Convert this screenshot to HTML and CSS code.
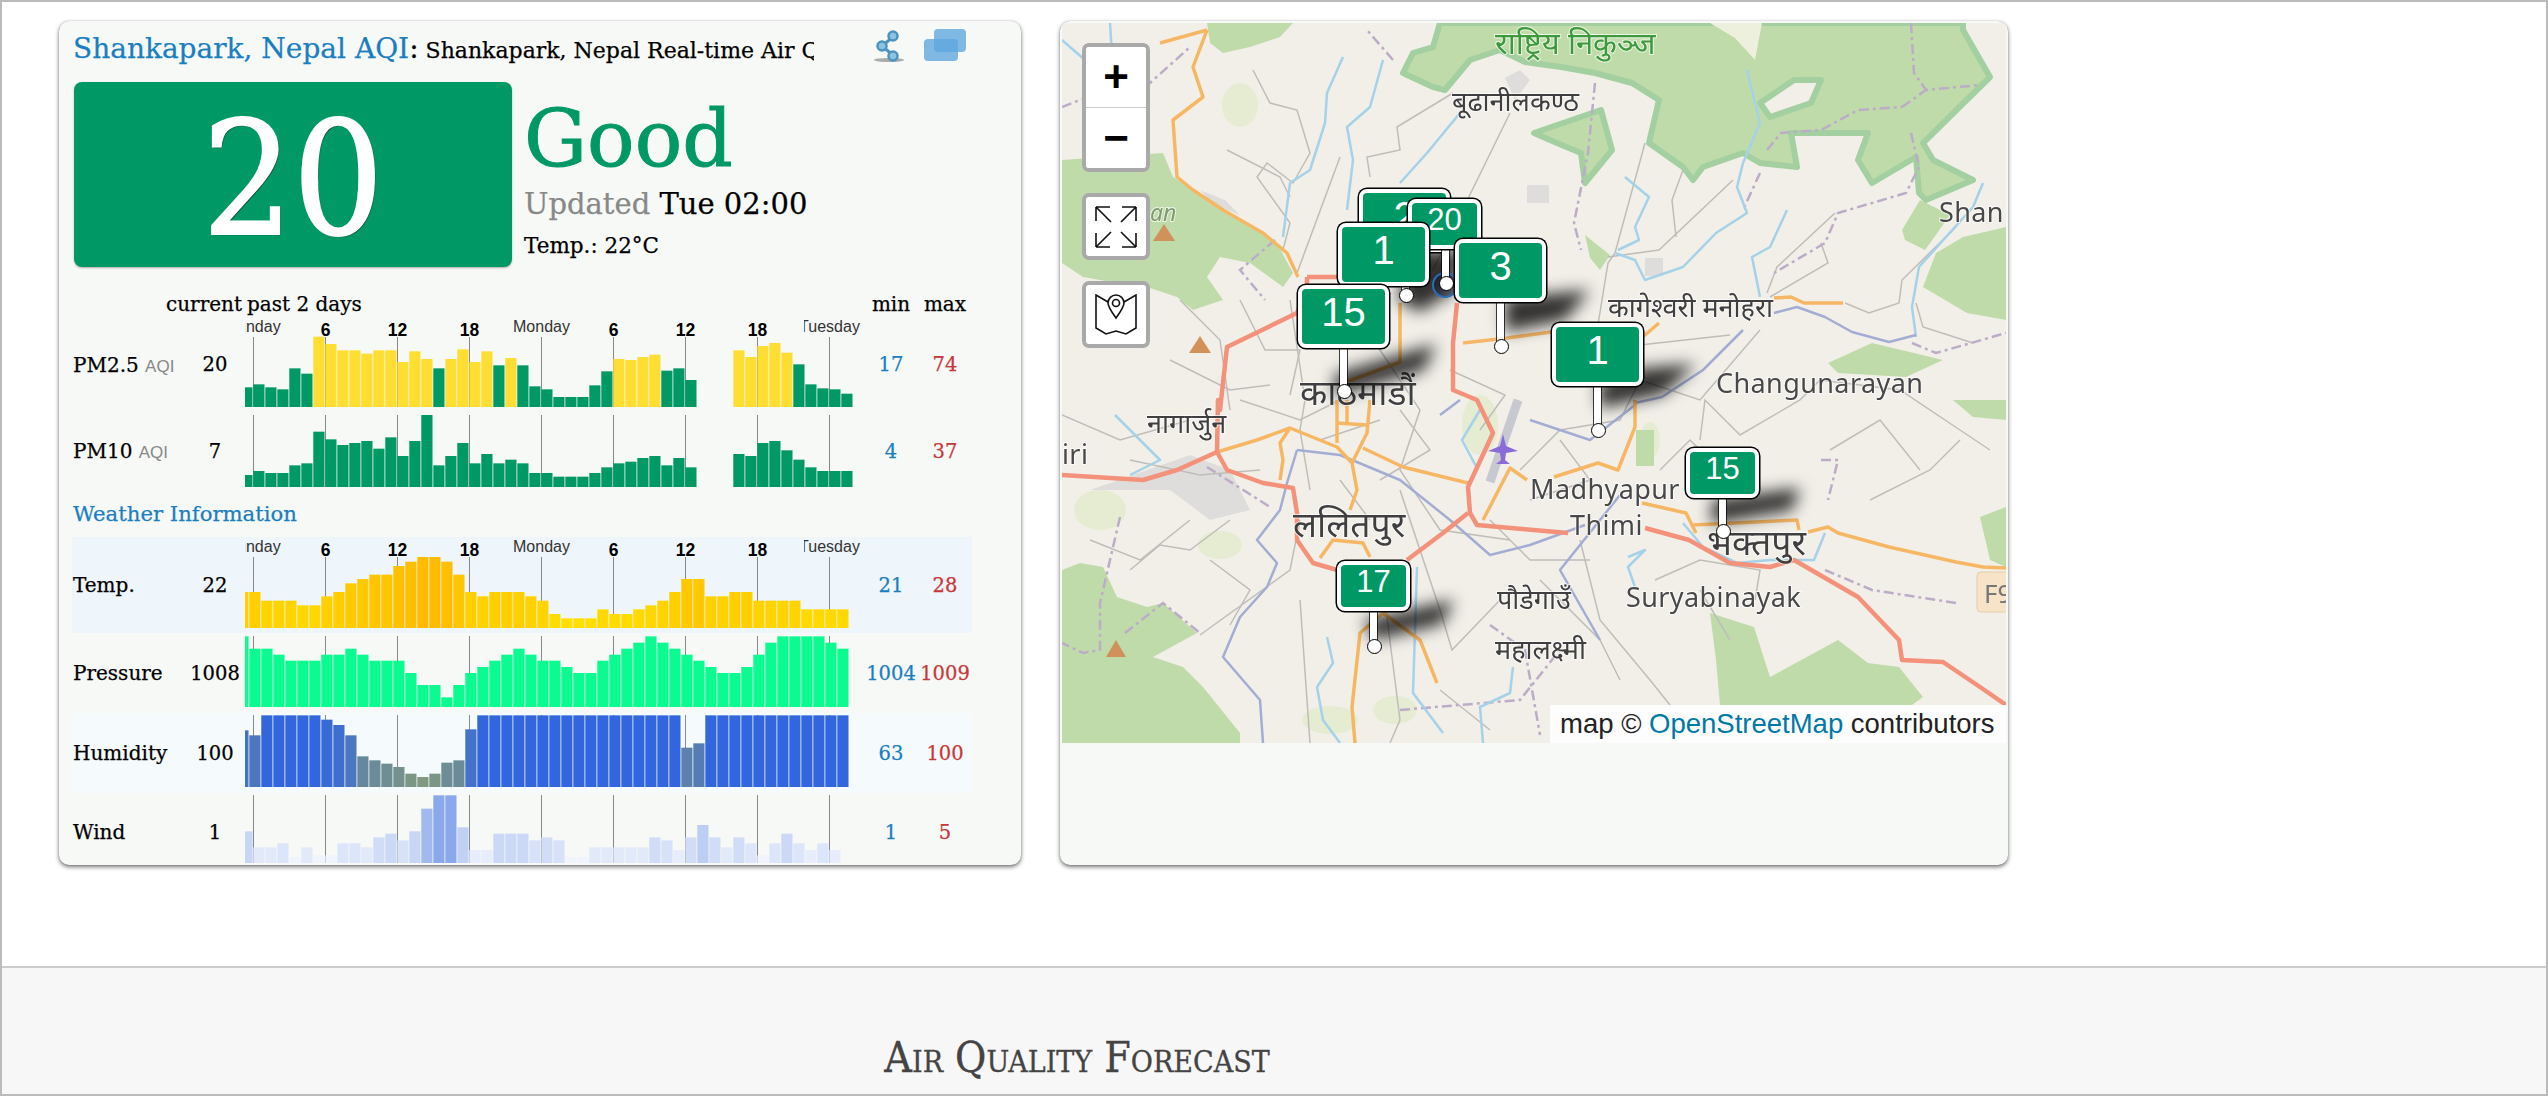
FILE: index.html
```html
<!DOCTYPE html>
<html lang="en">
<head>
<meta charset="utf-8">
<title>Shankapark, Nepal AQI</title>
<link rel="stylesheet" href="styles.css">
</head>
<body>
<div class="page">
  <main class="cards">
    <section class="card card-aqi">
      <header class="title-row">
        <h1 class="title"><a class="title-link">Shankapark, Nepal AQI</a><span class="colon">:</span> <span class="title-sub">Shankapark, Nepal Real-time Air Quality Index</span></h1>
        <svg class="icon-share" viewBox="0 0 32 34" aria-hidden="true">
          <ellipse class="icon-share-base" cx="16" cy="31" rx="15" ry="2"/>
          <path class="icon-share-link" d="M21 7 L9 17 L21 27"/>
          <circle class="icon-share-dot" cx="20" cy="7" r="4.5"/>
          <circle class="icon-share-dot" cx="9" cy="17" r="4.5"/>
          <circle class="icon-share-dot" cx="20" cy="27" r="4.5"/>
        </svg>
        <svg class="icon-windows" viewBox="0 0 43 33" aria-hidden="true">
          <rect class="icon-window" x="10" y="0" width="32" height="23" rx="4"/>
          <rect class="icon-window" x="0" y="10" width="34" height="22" rx="4"/>
        </svg>
      </header>
      <div class="summary">
        <div class="aqi-box">20</div>
        <div class="summary-text">
          <div class="level">Good</div>
          <div class="updated"><span class="updated-label">Updated</span> Tue 02:00</div>
          <div class="temp-now">Temp.: 22°C</div>
        </div>
      </div>

      <div class="row row-head">
        <span></span>
        <span class="head-current">current</span>
        <span class="head-past">past 2 days</span>
        <span class="cell-num">min</span>
        <span class="cell-num">max</span>
      </div>
      <div class="row row-pm25">
        <span class="label">PM2.5 <small class="aqi-tag">AQI</small></span>
        <span class="cell-num">20</span>
        <div class="chart" data-chart="pm25"></div>
        <span class="cell-num low">17</span>
        <span class="cell-num high">74</span>
      </div>
      <div class="row row-pm10">
        <span class="label">PM10 <small class="aqi-tag">AQI</small></span>
        <span class="cell-num">7</span>
        <div class="chart" data-chart="pm10"></div>
        <span class="cell-num low">4</span>
        <span class="cell-num high">37</span>
      </div>
      <h2 class="weather-title">Weather Information</h2>
      <div class="row row-temp">
        <span class="label">Temp.</span>
        <span class="cell-num">22</span>
        <div class="chart" data-chart="temp"></div>
        <span class="cell-num low">21</span>
        <span class="cell-num high">28</span>
      </div>
      <div class="row row-pressure">
        <span class="label">Pressure</span>
        <span class="cell-num">1008</span>
        <div class="chart" data-chart="pressure"></div>
        <span class="cell-num low">1004</span>
        <span class="cell-num high">1009</span>
      </div>
      <div class="row row-humidity">
        <span class="label">Humidity</span>
        <span class="cell-num">100</span>
        <div class="chart" data-chart="humidity"></div>
        <span class="cell-num low">63</span>
        <span class="cell-num high">100</span>
      </div>
      <div class="row row-wind">
        <span class="label">Wind</span>
        <span class="cell-num">1</span>
        <div class="chart" data-chart="wind"></div>
        <span class="cell-num low">1</span>
        <span class="cell-num high">5</span>
      </div>
    </section>

    <section class="card card-map">
      <div class="map">
        <svg class="map-art" viewBox="1062 23 944 720" aria-hidden="true">
          <rect class="land" x="1062" y="23" width="944" height="720"/>
          <g class="urban">
            <path d="M1090 490 1190 455 1230 470 1250 510 1210 520 1170 490Z"/>
            <path d="M1200 190 1225 200 1240 215 1215 205Z"/>
            <path d="M1530 80 1520 70 1505 78 1515 100Z"/>
            <path d="M1527 185h22v18h-22z"/>
            <path d="M1645 258h18v18h-18z"/>
          </g>
          <g class="pale">
            <ellipse cx="1240" cy="105" rx="18" ry="22"/>
            <ellipse cx="1100" cy="510" rx="26" ry="20"/>
            <ellipse cx="1220" cy="545" rx="22" ry="14"/>
            <ellipse cx="1330" cy="720" rx="28" ry="14"/>
            <ellipse cx="1395" cy="710" rx="22" ry="14"/>
            <ellipse cx="1480" cy="425" rx="18" ry="30"/>
            <ellipse cx="1650" cy="440" rx="10" ry="18"/>
          </g>
          <g class="forest">
            <path d="M1062 160 1163 153 1173 177 1207 197 1237 217 1277 243 1293 273 1283 287 1250 263 1220 257 1207 277 1223 300 1193 310 1177 297 1147 287 1117 283 1083 277 1062 263Z"/>
            <path d="M1207 23 1293 23 1280 37 1250 47 1223 53 1210 43Z"/>
            <path d="M1062 570 1080 563 1103 567 1117 597 1147 607 1163 603 1197 633 1153 657 1183 667 1203 687 1240 733 1240 743 1062 743Z"/>
            <path d="M1710 613 1754 627 1770 677 1838 640 1868 663 1899 667 1923 697 1912 705 1720 705 1716 660Z"/>
            <path d="M1963 237 2006 227 2006 320 1967 313 1923 287 1936 253Z"/>
            <path d="M1902 230 1920 200 1950 215 1925 250 1905 240Z"/>
            <path d="M1828 363 1872 343 1943 360 1906 377 1838 373Z"/>
            <path d="M1980 517 2006 507 2006 567 1990 560Z"/>
            <path d="M1953 400 2006 400 2006 420 1973 417Z"/>
            <path d="M1636 430h18v36h-18z"/>
            <path d="M1585 235 1610 255 1600 270 1590 258Z"/>
          </g>
          <g class="forest forest-edge">
            <path d="M1440 23 1433 47 1413 53 1403 73 1433 87 1445 90 1470 60 1500 50 1525 62 1561 67 1595 73 1632 83 1659 100 1649 143 1683 167 1693 180 1703 167 1743 153 1760 163 1797 167 1791 133 1868 133 1858 160 1872 183 1916 157 1919 193 1926 200 1973 180 1933 160 1923 143 1990 77 1963 30 1963 23Z"/>
            <path d="M1534 133 1601 110 1612 150 1585 183 1581 153 1557 143Z"/>
          </g>
          <path class="hole" d="M1760 103 1794 80 1821 80 1811 103 1770 117Z"/>
          <path class="hole-soft" d="M1710 23 1762 23 1755 60 1735 38Z"/>
          <g class="road-gray">
            <path d="M1253 70 1270 103 1297 110 1310 153 1293 183 1267 163 1257 177 1290 223 1283 250"/>
            <path d="M1227 150 1280 177 1290 197"/>
            <path d="M1453 93 1397 127 1400 150 1367 157 1370 177"/>
            <path d="M1510 113 1433 270"/>
            <path d="M1297 273 1340 157"/>
            <path d="M1645 143 1615 253 1608 263 1595 343"/>
            <path d="M1608 257 1659 250 1733 180"/>
            <path d="M1676 237 1672 200 1683 170"/>
            <path d="M1767 293 1777 267 1835 213"/>
            <path d="M1770 297 1828 263 1821 243"/>
            <path d="M1845 303 1869 313 1899 303 1902 280 1956 227"/>
            <path d="M1916 303 1923 327 1973 343"/>
            <path d="M1290 300 1305 400 1300 430 1310 490"/>
            <path d="M1240 400 1300 420 1340 400"/>
            <path d="M1360 320 1420 410 1400 470 1440 530 1510 540"/>
            <path d="M1450 370 1505 395 1480 430"/>
            <path d="M1300 600 1310 743"/>
            <path d="M1340 480 1370 520"/>
            <path d="M1230 520 1190 550 1160 545 1130 570"/>
            <path d="M1200 635 1290 570 1300 520"/>
            <path d="M1400 490 1440 610 1452 650 1500 600"/>
            <path d="M1386 610 1400 720 1390 743"/>
            <path d="M1520 470 1560 430 1620 420 1640 380 1700 400 1760 330"/>
            <path d="M1700 440 1705 400 1740 435 1800 400 1820 380 1900 390 1960 430 1990 450"/>
            <path d="M1655 580 1700 560 1760 570 1755 600"/>
            <path d="M1580 540 1600 620 1650 680 1670 705"/>
            <path d="M1870 500 1930 470 1960 440"/>
            <path d="M1540 580 1600 640 1620 680"/>
            <path d="M1440 690 1490 730"/>
            <path d="M1130 460 1200 475 1260 470"/>
            <path d="M1062 415 1120 440 1190 420"/>
            <path d="M1180 300 1220 340 1230 410"/>
            <path d="M1560 350 1600 380 1640 345 1730 335"/>
            <path d="M1240 300 1265 350 1300 350 1290 395"/>
            <path d="M1170 360 1230 390 1270 385"/>
            <path d="M1400 410 1430 450 1380 480"/>
            <path d="M1320 440 1380 420"/>
            <path d="M1560 440 1590 480 1530 500"/>
            <path d="M1660 470 1690 440 1720 470"/>
            <path d="M1210 560 1250 590 1230 625"/>
            <path d="M1700 590 1730 640"/>
            <path d="M1830 450 1880 420 1920 470"/>
            <path d="M1090 540 1140 560 1190 520"/>
            <path d="M1490 520 1530 560 1590 560"/>
          </g>
          <g class="airport"><path d="M1518 400 1490 482"/></g>
          <g class="bound">
            <path d="M1911 23 1914 73 1926 90 1980 85"/>
            <path d="M1902 107 1926 90"/>
            <path d="M1767 150 1781 133 1821 130 1858 110 1902 107"/>
            <path d="M1911 133 1919 167 1906 193 1838 213 1825 243 1774 273"/>
            <path d="M1760 173 1743 210"/>
            <path d="M1595 83 1588 153 1574 223 1581 250"/>
            <path d="M1393 60 1367 30"/>
            <path d="M1062 107 1080 100 1150 83 1190 47"/>
            <path d="M1207 467 1270 507"/>
            <path d="M1120 517 1100 603 1100 650 1083 653 1062 643"/>
            <path d="M1125 633 1163 603 1200 633"/>
            <path d="M1821 460 1838 460 1828 500"/>
            <path d="M1825 570 1872 590 1956 603"/>
            <path d="M1912 343 1936 353 2006 333"/>
            <path d="M1400 710 1520 700 1560 650"/>
            <path d="M1275 240 1240 270 1265 300"/>
            <path d="M1490 625 1525 650 1540 735"/>
          </g>
          <g class="river">
            <path d="M1343 57 1327 93 1325 123 1310 170 1290 183 1283 237"/>
            <path d="M1383 60 1370 107 1347 127 1353 160 1347 210"/>
            <path d="M1460 113 1427 153 1400 183"/>
            <path d="M1625 177 1649 197 1635 227 1639 240 1618 250"/>
            <path d="M1747 70 1760 123 1743 163 1737 187 1747 213 1716 233 1683 267 1645 280 1635 260 1615 253"/>
            <path d="M1787 210 1770 247 1752 257 1760 297"/>
            <path d="M1983 183 1973 207 1919 267 1912 307 1916 337"/>
            <path d="M1628 557 1645 550 1628 567 1635 587"/>
            <path d="M1327 637 1333 663 1317 687 1323 720 1340 743"/>
            <path d="M1417 567 1413 693 1443 733"/>
            <path d="M1513 667 1510 693 1480 707 1483 743"/>
            <path d="M1683 523 1703 547 1737 563 1770 560 1814 560 1825 533"/>
            <path d="M1062 40 1085 60 1105 75"/>
            <path d="M1110 23 1112 55"/>
            <path d="M1115 415 1160 460 1130 475"/>
            <path d="M1480 410 1462 440 1478 470"/>
          </g>
          <g class="river-deep">
            <path d="M1774 313 1797 307 1825 317 1852 332 1889 342 1916 335"/>
            <path d="M1743 330 1703 370 1662 397 1635 403"/>
            <path d="M1297 450 1287 483 1280 510 1257 540 1277 563 1267 587 1240 617 1223 657 1260 700 1263 743"/>
            <path d="M1297 450 1340 455 1400 480 1450 520 1490 555 1530 545 1585 525"/>
            <path d="M1460 400 1440 415"/>
            <path d="M1530 420 1590 440 1635 405"/>
            <path d="M1620 495 1560 570 1600 640"/>
          </g>
          <g class="road-orange">
            <path d="M1207 30 1160 43"/>
            <path d="M1207 30 1193 67 1203 97 1173 120 1177 177 1193 190 1223 210 1263 233 1287 253 1298 277"/>
            <path d="M1217 452 1257 440 1290 428 1337 447 1352 463 1357 490 1350 510"/>
            <path d="M1290 428 1280 443 1283 460 1280 480"/>
            <path d="M1337 400 1337 443"/>
            <path d="M1347 400 1347 423"/>
            <path d="M1370 400 1367 433 1352 463"/>
            <path d="M1337 423 1367 425"/>
            <path d="M1363 448 1403 467 1468 483"/>
            <path d="M1483 520 1510 468 1527 480"/>
            <path d="M1320 558 1333 540 1363 543 1370 557"/>
            <path d="M1355 743 1352 707 1360 633 1383 613 1420 640 1437 683"/>
            <path d="M1554 477 1598 463 1618 470 1635 427 1635 400"/>
            <path d="M1642 503 1686 513 1696 533"/>
            <path d="M1693 525 1797 520 1799 530"/>
            <path d="M1808 532 1828 527 1838 533 1889 547 1956 562 1983 567 2006 568"/>
            <path d="M1774 298 1791 297 1804 303 1843 303"/>
            <path d="M1463 343 1507 338 1551 332 1645 335 1659 323"/>
            <path d="M1338 385 1400 362 1400 303"/>
          </g>
          <g class="road-red">
            <path d="M1307 277 1307 287 1297 313 1227 347 1220 410 1218 400 1217 452"/>
            <path d="M1307 277 1383 277"/>
            <path d="M1457 303 1453 343 1453 390 1477 400 1493 433 1468 487 1470 513 1477 525 1568 533"/>
            <path d="M1645 528 1689 540 1730 563 1770 567 1794 560 1858 597 1899 640 1902 660 1943 662 1980 687 2006 705"/>
            <path d="M1062 475 1143 480 1177 470 1217 452 1227 470 1263 483 1293 488 1297 513 1297 540 1313 563 1337 570"/>
            <path d="M1407 560 1443 533 1468 513"/>
          </g>
          <g class="peak">
            <path d="M1164 224 1175 241H1153Z"/>
            <path d="M1200 336 1211 353H1189Z"/>
            <path d="M1116 640 1126 657H1106Z"/>
          </g>
          <g class="plane">
            <path d="M1503 434 1506 446 1518 451 1506 453 1505 460 1510 464H1496L1501 460 1500 453 1488 451 1500 446Z"/>
          </g>
          <rect class="shield" x="1977" y="572" width="40" height="40" rx="4"/>
          <text class="shield-text" x="1984" y="603">F9</text>
          <g class="place">
            <text class="place-park" x="1495" y="54">राष्ट्रिय निकुञ्ज</text>
            <text x="1452" y="111">बूढानीलकण्ठ</text>
            <text class="place-latin" x="1939" y="222">Shan</text>
            <text x="1608" y="317">कागेश्वरी मनोहरा</text>
            <text class="place-latin" x="1716" y="393">Changunarayan</text>
            <text class="place-big" x="1300" y="405">काठमाडौं</text>
            <text x="1147" y="433">नागार्जुन</text>
            <text class="place-latin" x="1062" y="464">iri</text>
            <text class="place-big" x="1293" y="537">ललितपुर</text>
            <text class="place-latin" x="1530" y="499">Madhyapur</text>
            <text class="place-latin" x="1570" y="535">Thimi</text>
            <text class="place-big" x="1707" y="555">भक्तपुर</text>
            <text x="1497" y="609">पौडेगाउँ</text>
            <text class="place-latin" x="1626" y="607">Suryabinayak</text>
            <text x="1495" y="659">महालक्ष्मी</text>
            <text class="place-park-latin" x="1150" y="221">an</text>
          </g>
          <g class="pin-shadows">
            <path d="M1410 250 1462 250 1455 290 1420 312 1398 300Z"/>
            <path d="M1505 298 1590 290 1565 320 1505 332Z"/>
            <path d="M1644 368 1696 364 1664 394 1600 408 1598 384Z"/>
            <path d="M1335 374 1436 344 1424 370 1335 396Z"/>
            <path d="M1712 500 1800 488 1792 510 1712 524Z"/>
            <path d="M1364 620 1454 600 1442 624 1374 640Z"/>
          </g>
          <circle class="ring" cx="1445" cy="285" r="12"/>
        </svg>

        <div class="zoom-ctl">
          <button class="ctl-btn ctl-plus" type="button">+</button>
          <button class="ctl-btn ctl-minus" type="button">−</button>
        </div>
        <button class="ctl-single ctl-full" type="button" aria-label="Full screen">
          <svg class="ctl-icon" viewBox="0 0 42 42" aria-hidden="true">
            <path d="M1 1h14M1 1v14M1 1l15 15M41 1h-14M41 1v14M41 1 26 16M1 41h14M1 41v-14M1 41l15-15M41 41h-14M41 41v-14M41 41 26 26"/>
          </svg>
        </button>
        <button class="ctl-single ctl-layers" type="button" aria-label="Map">
          <svg class="ctl-icon" viewBox="0 0 42 42" aria-hidden="true">
            <path d="M13 8 1 1v33l10 6 10-3 10 3 10-6V1L29 8"/>
            <path d="M21 24c-5-7-8-11-8-15a8 8 0 0 1 16 0c0 4-3 8-8 15z"/>
            <circle cx="21" cy="9" r="3.5"/>
          </svg>
        </button>

        <div class="pin pin-lg pin-a"><span class="pin-sign">2</span></div>
        <div class="pin pin-sm pin-b"><i class="pin-stem"></i><span class="pin-sign">20</span></div>
        <div class="pin pin-lg pin-c"><i class="pin-stem"></i><span class="pin-sign">1</span></div>
        <div class="pin pin-lg pin-d"><i class="pin-stem"></i><span class="pin-sign">3</span></div>
        <div class="pin pin-lg pin-e"><i class="pin-stem"></i><span class="pin-sign">15</span></div>
        <div class="pin pin-lg pin-f"><i class="pin-stem"></i><span class="pin-sign">1</span></div>
        <div class="pin pin-sm pin-g"><i class="pin-stem"></i><span class="pin-sign">15</span></div>
        <div class="pin pin-sm pin-h"><i class="pin-stem"></i><span class="pin-sign">17</span></div>

        <div class="attribution">map © <a class="attribution-link">OpenStreetMap</a> contributors</div>
      </div>
    </section>
  </main>
  <footer class="forecast">
    <h2 class="forecast-title">Air Quality Forecast</h2>
  </footer>
</div>
<script src="script.js"></script>
</body>
</html>
```

FILE: styles.css
```css
* { box-sizing: border-box; }
html, body { margin: 0; height: 100%; background: #fff; }
body { font-family: "DejaVu Serif", "Liberation Serif", serif; color: #000; overflow: hidden; }

.page {
  height: 1096px;
  border: 2px solid #bbb;
  display: flex;
  flex-direction: column;
}
.cards {
  display: flex;
  gap: 39px;
  padding: 19px 0 0 57px;
  height: 964px;
  flex: none;
}

.card {
  height: 844px;
  background: #f7f9f7;
  border-radius: 10px;
  box-shadow: 0 0 1px rgba(0,0,0,.35), 0 2px 4px rgba(0,0,0,.55);
  overflow: hidden;
}
.card-aqi { width: 962px; padding: 0 49px 0 13px; -webkit-text-stroke: .25px; }
.card-map { width: 948px; padding: 2px 2px 0 2px; }

/* title */
.title-row { display: flex; align-items: flex-start; height: 61px; padding-left: 1px; }
.title {
  width: 741px;
  margin: 0;
  padding-top: 8px;
  font-weight: 400;
  font-size: 22px;
  line-height: 40px;
  white-space: nowrap;
  overflow: hidden;
  flex: none;
}
.title-link { font-size: 28px; color: #1a7fc1; }
.colon { font-size: 28px; }
.icon-share { width: 32px; height: 34px; margin: 8px 0 0 59px; flex: none; }
.icon-share-base { fill: #a9acab; }
.icon-share-link { fill: none; stroke: #4e93bd; stroke-width: 3; }
.icon-share-dot { fill: #8cc2e2; stroke: #4e93bd; stroke-width: 2.5; }
.icon-windows { width: 43px; height: 33px; margin: 8px 0 0 19px; flex: none; }
.icon-window { fill: #5fa8dd; opacity: .8; }

/* summary */
.summary { display: flex; height: 208px; padding-left: 2px; }
.aqi-box {
  width: 438px;
  height: 185px;
  background: #009966;
  border-radius: 8px;
  box-shadow: 0 1px 2px rgba(0,0,0,.3);
  color: #fff;
  font-family: "DejaVu Serif Condensed", "DejaVu Serif", serif;
  font-size: 158px;
  line-height: 194px;
  text-align: center;
  text-shadow: 1px 1px 1px #000;
  -webkit-text-stroke: 2px #fff;
}
.summary-text { padding-left: 12px; }
.level { color: #009966; font-size: 79px; line-height: 90px; margin-top: 12px; -webkit-text-stroke: 1px #009966; }
.updated { font-size: 29px; line-height: 40px; }
.updated-label { color: #888; }
.temp-now { font-size: 21.5px; line-height: 30px; margin-top: 7px; }

/* table rows */
.row {
  display: grid;
  grid-template-columns: 113px 60px 619px 54px 54px;
  align-items: center;
  font-size: 20px;
}
.row-head { height: 28px; line-height: 28px; }
.head-current { justify-self: end; white-space: nowrap; padding-right: 3px; }
.head-past { padding-left: 2px; }
.label { padding-left: 1px; white-space: nowrap; font-size: 20px; }
.aqi-tag { font-family: "Liberation Sans", sans-serif; font-size: 17px; color: #888; -webkit-text-stroke: 0; }
.cell-num { text-align: center; font-size: 19.5px; white-space: nowrap; }
.row-head .cell-num { font-size: 20px; }
.low { color: #1a7fc1; }
.high { color: #c9383a; }
.chart { align-self: start; line-height: 0; -webkit-text-stroke: 0; }
.chart-svg { display: block; overflow: hidden; }
.chart-line { stroke: #888; stroke-width: 1; }
.chart-day { font-family: "Liberation Sans", sans-serif; font-size: 16px; fill: #333; text-anchor: middle; }
.chart-hour { font-family: "Liberation Sans", sans-serif; font-size: 17.5px; font-weight: 700; fill: #000; text-anchor: middle; }

.row-pm25 { height: 93px; }
.row-pm10 { height: 80px; }
.row-pm10 .chart { margin-top: 4px; }
.weather-title {
  margin: 0;
  padding: 3px 0 0 1px;
  height: 46px;
  font-size: 21.2px;
  font-weight: 400;
  line-height: 40px;
  color: #1a7fc1;
}
.row-temp { height: 96px; background: #eef5fb; }
.row-pressure { height: 80px; }
.row-pressure .chart { margin-top: 3px; }
.row-humidity { height: 80px; background: #f5fbfc; }
.row-humidity .chart { margin-top: 2px; }
.row-wind { height: 72px; }
.row-wind .chart { margin-top: 2px; }
.row-wind > span { padding-top: 6px; }

/* map */
.map { position: relative; width: 944px; height: 720px; overflow: hidden; }
.map-art { display: block; width: 944px; height: 720px; filter: blur(.6px); }
.land { fill: #f2efe9; }
.urban path { fill: #dfdddb; }
.pale ellipse { fill: #e6ecd2; }
.forest path { fill: #c0dbaa; }
.forest-edge path { stroke: #a4cfa0; stroke-width: 6; stroke-linejoin: round; }
.hole { fill: #f2efe9; stroke: #a4cfa0; stroke-width: 6; stroke-linejoin: round; }
.hole-soft { fill: #eef0de; }
.road-gray path { fill: none; stroke: #bfbdb9; stroke-width: 1.5; }
.airport path { fill: none; stroke: #c8c8d0; stroke-width: 9; }
.bound path { fill: none; stroke: #bcacc8; stroke-width: 2.5; stroke-dasharray: 10 4 3 4; }
.river path { fill: none; stroke: #a5d2e8; stroke-width: 2.5; stroke-linejoin: round; }
.river-deep path { fill: none; stroke: #a3add3; stroke-width: 2.5; stroke-linejoin: round; }
.road-orange path { fill: none; stroke: #f6b765; stroke-width: 3.5; stroke-linejoin: round; }
.road-red path { fill: none; stroke: #f3917a; stroke-width: 4.5; stroke-linejoin: round; }
.peak path { fill: #d1915b; }
.plane path { fill: #8a6bd8; }
.shield { fill: #f7e3c8; stroke: #e5cda9; stroke-width: 1; }
.shield-text { font-family: "Noto Sans", sans-serif; font-size: 26px; fill: #777; }
.place text {
  font-family: "Noto Sans", "Noto Sans Devanagari", "Lohit Devanagari", sans-serif;
  font-size: 27px;
  fill: #3f3f3f;
  paint-order: stroke;
  stroke: rgba(255,255,255,.7);
  stroke-width: 2px;
}
.place .place-big { font-size: 35.5px; }
.place .place-latin { font-size: 27px; letter-spacing: .4px; fill: #484848; }
.place .place-park { font-size: 31px; fill: #3c9a3c; }
.place .place-park-latin { font-size: 23px; font-style: italic; fill: #7f9a6f; }
.pin-shadows path { fill: rgba(0,0,0,.8); filter: blur(8px); }
.ring { fill: rgba(20,30,50,.55); stroke: #2a6db5; stroke-width: 2; }

.zoom-ctl {
  position: absolute;
  left: 20px;
  top: 20px;
  width: 68px;
  border: 4px solid #a9a9a9;
  border-radius: 7px;
  background: #fff;
  overflow: hidden;
}
.ctl-btn {
  display: block;
  width: 60px;
  height: 60px;
  padding: 0;
  border: 0;
  background: #fff;
  color: #000;
  font-family: "Liberation Sans", sans-serif;
  font-size: 44px;
  font-weight: 700;
  line-height: 60px;
  text-align: center;
}
.ctl-plus { border-bottom: 1px solid #ccc; height: 61px; }
.ctl-single {
  position: absolute;
  left: 20px;
  width: 68px;
  height: 67px;
  padding: 0;
  border: 4px solid #a9a9a9;
  border-radius: 7px;
  background: #fff;
  display: flex;
  align-items: center;
  justify-content: center;
}
.ctl-full { top: 170px; }
.ctl-layers { top: 258px; }
.ctl-icon { width: 42px; height: 42px; fill: none; stroke: #111; stroke-width: 1.6; }

.pin { position: absolute; }
.pin-sign {
  position: relative;
  display: block;
  width: 100%;
  height: 100%;
  border: 4px solid #fff;
  border-radius: 8px;
  background: #009966;
  box-shadow: 0 0 0 1.5px #000;
  color: #fff;
  font-family: "Liberation Sans", sans-serif;
  text-align: center;
}
.pin-lg { width: 91px; height: 63px; }
.pin-lg .pin-sign { font-size: 40px; line-height: 46px; }
.pin-sm { width: 73px; height: 50px; }
.pin-sm .pin-sign { font-size: 31px; line-height: 34px; }
.pin-stem {
  position: absolute;
  top: 0;
  width: 7px;
  background: #fff;
  box-shadow: 0 0 0 1px rgba(0,0,0,.75);
}
.pin-stem::after {
  content: "";
  position: absolute;
  left: -3px;
  bottom: -3px;
  width: 13px;
  height: 13px;
  border-radius: 50%;
  background: #fff;
  border: 1px solid #000;
}
.pin-a { left: 297px; top: 166px; }
.pin-b { left: 346px; top: 176px; }
.pin-b .pin-stem { left: 34px; height: 89px; }
.pin-c { left: 276px; top: 200px; }
.pin-c .pin-stem { left: 64px; height: 77px; }
.pin-d { left: 393px; top: 216px; }
.pin-d .pin-stem { left: 42px; height: 112px; }
.pin-e { left: 236px; top: 262px; }
.pin-e .pin-stem { left: 42px; height: 111px; }
.pin-f { left: 490px; top: 300px; }
.pin-f .pin-stem { left: 42px; height: 112px; }
.pin-g { left: 624px; top: 425px; }
.pin-g .pin-stem { left: 33px; height: 88px; }
.pin-h { left: 275px; top: 538px; }
.pin-h .pin-stem { left: 33px; height: 90px; }

.attribution {
  position: absolute;
  right: 0;
  bottom: 0;
  width: 456px;
  height: 38px;
  background: rgba(255,255,255,.88);
  color: #222;
  font-family: "Liberation Sans", sans-serif;
  font-size: 27.5px;
  line-height: 38px;
  padding-left: 10px;
  white-space: nowrap;
}
.attribution-link { color: #0078a8; }

/* footer */
.forecast {
  flex: 1;
  border-top: 2px solid #ccc;
  background: #f7f7f7;
  padding: 66px 394px 0 0;
  text-align: center;
}
.forecast-title {
  margin: 0;
  font-family: "DejaVu Serif Condensed", "DejaVu Serif", serif;
  font-size: 42.5px;
  font-weight: 400;
  font-variant: small-caps;
  line-height: 48px;
  color: #444;
  -webkit-text-stroke: .3px #444;
}
```

FILE: script.js
```js
var NS = "http://www.w3.org/2000/svg";

function mix(a, b, t) {
  t = Math.max(0, Math.min(1, t));
  return "rgb(" + a.map(function (v, i) { return Math.round(v + (b[i] - v) * t); }).join(",") + ")";
}

var CHARTS = {
  pm25: {
    h: 89, lineTop: 19, labels: 1, bottom: 381, first: 7.5, x0: 8.3, firstTop: 322,
    tops: [313,322,328,265,281,170,192,211,211,221,211,211,246,214,237,265,237,208,246,214,256,234,256,319,328,351,351,351,316,274,237,240,231,224,272,265,300,null,null,null,211,231,198,189,218,253,313,325,328,341],
    color: function (t) { return t <= 250 ? "#ffde33" : "#009966"; }
  },
  pm10: {
    h: 72, lineTop: 0, bottom: 621, first: 7.5, x0: 8.3, firstTop: 585,
    tops: [573,579,579,556,550,455,478,495,489,483,506,472,528,483,405,556,528,489,550,522,550,539,550,579,579,590,590,590,579,562,550,545,534,528,556,534,562,null,null,null,522,528,489,483,511,539,562,573,573,573],
    color: function () { return "#009966"; }
  },
  temp: {
    h: 91, lineTop: 20, labels: 1, bottom: 323, first: 3.5, x0: 4.3, firstTop: 215,
    tops: [215,241,241,241,255,255,228,215,189,176,163,163,137,124,110,110,124,163,215,228,215,215,215,228,241,281,294,294,294,267,281,281,267,255,241,215,176,176,228,228,215,215,241,241,241,241,267,267,267,267],
    color: function (t) { return mix([255,222,0], [255,187,0], (294 - t) / 184); }
  },
  pressure: {
    h: 71, lineTop: 0, bottom: 560, first: 3.5, x0: 4.3, firstTop: 348,
    tops: [385,385,403,421,421,421,403,403,385,403,421,421,421,458,494,494,531,494,458,440,421,403,385,403,421,421,440,458,458,421,403,385,367,348,367,385,403,421,440,458,458,440,403,367,348,348,348,348,367,385],
    color: function () { return "#0bfb91"; }
  },
  humidity: {
    h: 72, lineTop: 0, bottom: 800, first: 3.5, x0: 4.3, firstTop: 630,
    tops: [645,585,585,585,585,585,598,614,645,708,720,730,740,760,770,760,727,720,627,585,585,585,585,585,585,585,585,585,585,585,585,585,585,585,585,585,682,669,585,585,585,585,585,585,585,585,585,585,585,585],
    color: function (t) { return mix([51,102,221], [128,153,128], (t - 585) / 185); }
  },
  wind: {
    h: 68, lineTop: 0, bottom: 1028, first: 7.5, x0: 8.3, firstTop: 933,
    tops: [981,981,969,1010,981,1005,1005,969,969,981,951,940,960,933,865,825,825,921,989,989,940,940,940,960,951,960,1010,1010,981,981,981,981,981,951,960,989,951,914,951,981,951,969,1005,969,940,969,989,969,989],
    color: function (t) { return mix([240,244,253], [138,168,234], (1005 - t) / 180); }
  }
};

var LINES = [8.5, 80.5, 152.5, 224.5, 296.5, 368.5, 440.5, 512.5, 584.5];
var HOURS = [[80.5,"6"],[152.5,"12"],[224.5,"18"],[368.5,"6"],[440.5,"12"],[512.5,"18"]];

function el(name, attrs, parent) {
  var n = document.createElementNS(NS, name);
  Object.keys(attrs).forEach(function (k) { n.setAttribute(k, attrs[k]); });
  parent.appendChild(n);
  return n;
}

function build(host) {
  var c = CHARTS[host.dataset.chart];
  var svg = el("svg", { "class": "chart-svg", width: 619, height: c.h, viewBox: "0 0 619 " + c.h }, host);

  LINES.forEach(function (x) {
    el("line", { "class": "chart-line", x1: x, x2: x, y1: c.lineTop, y2: c.h }, svg);
  });

  function bar(x, w, top) {
    var height = (c.bottom - top) / 3;
    el("rect", { x: x, y: c.h - height, width: w, height: height, fill: c.color(top) }, svg);
  }
  bar(0, c.first, c.firstTop);
  c.tops.forEach(function (t, i) {
    if (t !== null) { bar(c.x0 + 12 * i, 11.2, t); }
  });

  if (c.labels) {
    var dayY = c.lineTop - 4.7, hourY = c.lineTop - 1.3;
    el("text", { "class": "chart-day", x: 8.5, y: dayY }, svg).textContent = "Sunday";
    el("text", { "class": "chart-day", x: 296.5, y: dayY }, svg).textContent = "Monday";
    var clip = el("svg", { x: 559, y: 0, width: 60, height: c.lineTop + 1 }, svg);
    el("text", { "class": "chart-day", x: 25.5, y: dayY }, clip).textContent = "Tuesday";
    HOURS.forEach(function (h) {
      el("text", { "class": "chart-hour", x: h[0], y: hourY }, svg).textContent = h[1];
    });
  }
}

document.querySelectorAll("[data-chart]").forEach(build);
```
